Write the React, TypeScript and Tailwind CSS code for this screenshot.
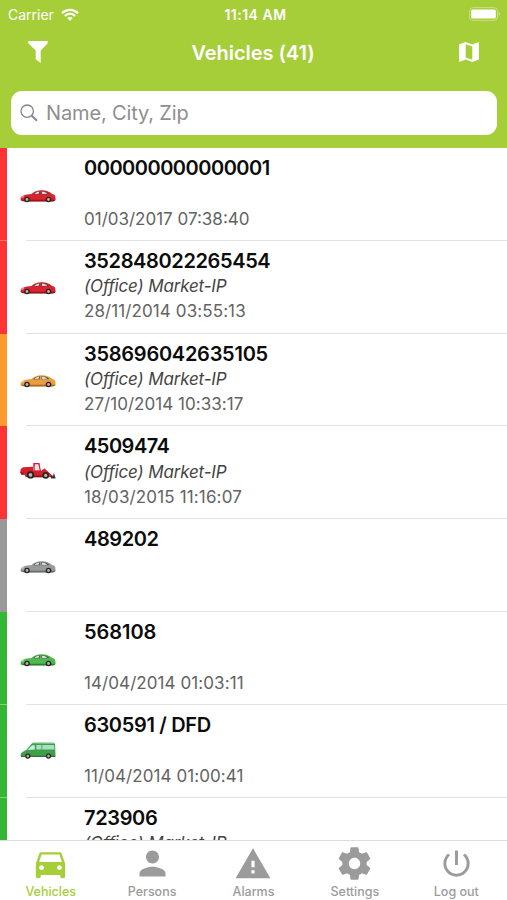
import type { ReactNode } from 'react';

type VehicleKind = 'car' | 'loader' | 'van' | 'none';

type Vehicle = {
  name: string;
  nameClass: string;
  group?: string;
  date?: string;
  dateClass?: string;
  kind: VehicleKind;
  paint: string;
  shade: string;
  bar: string;
};

const VEHICLES: Vehicle[] = [
  { name: '000000000000001', nameClass: 'tracking-[-0.5px]', date: '01/03/2017 07:38:40', dateClass: 'tracking-[0px]', kind: 'car', paint: '#d9232e', shade: '#96141c', bar: 'bg-[#fe3434] border-[#fb7474]' },
  { name: '352848022265454', nameClass: 'tracking-[-0.37px]', group: '(Office) Market-IP', date: '28/11/2014 03:55:13', dateClass: 'tracking-[0.1px]', kind: 'car', paint: '#d9232e', shade: '#96141c', bar: 'bg-[#fe3434] border-[#fe3434]' },
  { name: '358696042635105', nameClass: 'tracking-[-0.26px]', group: '(Office) Market-IP', date: '27/10/2014 10:33:17', dateClass: 'tracking-[0.04px]', kind: 'car', paint: '#eb9c3c', shade: '#a8681f', bar: 'bg-[#fe9a2e] border-[#fe9a2e]' },
  { name: '4509474', nameClass: 'tracking-[-0.5px]', group: '(Office) Market-IP', date: '18/03/2015 11:16:07', dateClass: 'tracking-[0.15px]', kind: 'loader', paint: '#d61f2c', shade: '#8f1019', bar: 'bg-[#fe3434] border-[#fe3434]' },
  { name: '489202', nameClass: 'tracking-[-0.4px]', kind: 'car', paint: '#9a9a9a', shade: '#6a6a6a', bar: 'bg-[#999999] border-[#999999]' },
  { name: '568108', nameClass: 'tracking-[-0.05px]', date: '14/04/2014 01:03:11', dateClass: 'tracking-[0.08px]', kind: 'car', paint: '#4fb84f', shade: '#2f7d35', bar: 'bg-[#33b734] border-[#7fd080]' },
  { name: '630591 / DFD', nameClass: 'tracking-[-0.33px]', date: '11/04/2014 01:00:41', dateClass: 'tracking-[0.08px]', kind: 'van', paint: '#3f9f49', shade: '#2c7436', bar: 'bg-[#33b734] border-[#7fd080]' },
  { name: '723906', nameClass: 'tracking-[-0.35px]', group: '(Office) Market-IP', kind: 'none', paint: '', shade: '', bar: 'bg-[#33b734] border-[#33b734]' },
];

function Wheel({ x, y, r }: { x: number; y: number; r: number }) {
  return (
    <>
      <circle cx={x} cy={y} r={r} fill="#2b2222" />
      <circle cx={x} cy={y} r={r * 0.5} fill="#b9b4b0" />
    </>
  );
}

function VehicleIcon({ kind, paint, shade }: Pick<Vehicle, 'kind' | 'paint' | 'shade'>) {
  if (kind === 'car') {
    return (
      <svg className="w-9 h-6" viewBox="0 0 36 24">
        <path d="M.6 16.2C.4 13.6 1 12.6 3 11.8c2.500-.9 5.500-1.500 8.400-1.700C14.500 7.500 17 6.300 21 6.300c5.500 0 8.300 1.200 11 3.600 2 .4 3 1 3.200 2.200l.4 3.300c-.1 1.100-1.200 1.700-2.800 1.900H7C3.800 17.300 1.600 17.100.6 16.200z" fill={paint} />
        <path d="M1 15.800h34.400c-.4 1-1.500 1.500-3 1.600H6c-2.500 0-4.400-.4-5-1.600z" fill={shade} />
        <path d="M13 10.200c2.400-2 4.300-2.900 7-3l-.4 3zM21.200 7.200c3.500 0 6 .7 8.300 2.700l-7.700.3z" fill="#4a4444" />
        <path d="M14.400 9.900c1.600-1.400 3.100-2.100 4.900-2.300l-.6 2.200zM21.800 7.700c2.400 0 4 .5 5.500 2l-5 .2z" fill="#dce5e7" />
        <path d="M1.400 12.900l2.300-.7.600.9-2.500.7z" fill="#f3d5c8" />
        <Wheel x={7} y={15.500} r={2.800} />
        <Wheel x={28.500} y={15.500} r={2.800} />
      </svg>
    );
  }
  if (kind === 'loader') {
    return (
      <svg className="w-9 h-6" viewBox="0 2 36 24">
        <path d="M.3 12.800c0-3.200.7-4.900 3-5.500l9.700-.6V17H5.500l-.7-2z" fill={paint} />
        <path d="M13.300 12V3h6.200l1.600 9z" fill={paint} />
        <path d="M14.600 10.500l.3-6.300h3.500l1.300 6.300z" fill="#e9e2e8" />
        <path d="M12 10.800h9l5.500.2 4.500 4.500-2 1.700H12z" fill={paint} />
        <path d="M13 15.500h12v1.700H13z" fill={shade} />
        <path d="M21.500 10.600l3-2.200 7.800 7-1.600 1.500z" fill={paint} />
        <path d="M.3 12.300h2l2.500 2.400H1.200z" fill={shade} />
        <path d="M30 16.200l3.300-.8.600-2.700 1.800 5.800h-4.400z" fill="#3c3030" />
        <Wheel x={10.500} y={14.900} r={3.700} />
        <Wheel x={25.700} y={15.400} r={3.300} />
      </svg>
    );
  }
  if (kind === 'van') {
    return (
      <svg className="w-9 h-6" viewBox="0 1.5 36 24">
        <path d="M.8 17.800c-.4-2.200 0-3.700 1.700-4.400l4-2.200 4.800-5.700c.7-.9 1.600-1.300 3-1.300h18.500c1.500 0 2.200.8 2.300 2l.4 11.600z" fill={paint} />
        <path d="M12 5c.8-.6 1.300-.8 2.300-.8h18.500c1.300 0 1.900.4 2.200 1.300z" fill="#7cc887" />
        <path d="M.8 17.200h34.600v1.200H1z" fill={shade} />
        <path d="M7.600 11.400l4.400-4.700h2.800v4.300z" fill="#c9ece8" />
        <path d="M16.300 6.600h5.200V11h-5.200zM22.300 6.600h11.800l.3 4.400H22.300z" fill="#a9dfc5" />
        <Wheel x={7.800} y={17.600} r={2.600} />
        <Wheel x={28.500} y={17.600} r={2.600} />
      </svg>
    );
  }
  return null;
}

function VehicleRow({ v }: { v: Vehicle }) {
  return (
    <div className="flex h-[92.83px] shrink-0">
      <div className={`w-[7px] border-b ${v.bar}`} />
      <div className="w-[13px]" />
      <div className="w-9 pt-[35.500px]">
        <VehicleIcon kind={v.kind} paint={v.paint} shade={v.shade} />
      </div>
      <div className="flex-1 pl-[28px] pt-[8px] whitespace-nowrap">
        <div className={`h-[25.300px] leading-[25.300px] text-[20px] font-semibold text-[#0c0c0c] ${v.nameClass}`}>{v.name}</div>
        <div className="h-[25.300px] leading-[25.300px] text-[17px] italic text-[#444] tracking-[-0.16px]">{v.group}</div>
        <div className={`h-[25.300px] leading-[25.300px] text-[17px] text-[#636363] ${v.dateClass ?? ''}`}>{v.date}</div>
      </div>
    </div>
  );
}

const TABS: { label: string; active?: boolean; size: string; icon: ReactNode }[] = [
  {
    label: 'Vehicles',
    active: true,
    size: 'size-[39px]',
    icon: <path d="M18.920 6.010C18.720 5.420 18.160 5 17.500 5h-11c-.66 0-1.210.42-1.420 1.010L3 12v8c0 .55.45 1 1 1h1c.55 0 1-.45 1-1v-1h12v1c0 .55.45 1 1 1h1c.55 0 1-.45 1-1v-8l-2.080-5.990zM6.500 16c-.83 0-1.500-.67-1.500-1.500S5.670 13 6.500 13s1.500.67 1.500 1.500S7.330 16 6.500 16zm11 0c-.83 0-1.500-.67-1.500-1.500s.67-1.500 1.500-1.500 1.500.67 1.500 1.500-.67 1.500-1.500 1.500zM5 11l1.500-4.500h11L19 11H5z" />,
  },
  { label: 'Persons', size: 'size-[39px]', icon: <path d="M12 12c2.210 0 4-1.790 4-4s-1.790-4-4-4-4 1.790-4 4 1.790 4 4 4zm0 2c-2.670 0-8 1.340-8 4v2h16v-2c0-2.660-5.330-4-8-4z" /> },
  { label: 'Alarms', size: 'size-[38px]', icon: <path d="M1 21h22L12 2 1 21zm12-3h-2v-2h2v2zm0-4h-2v-4h2v4z" /> },
  {
    label: 'Settings',
    size: 'size-[39px]',
    icon: <path d="M19.430 12.980c.04-.32.07-.64.07-.98s-.03-.66-.07-.98l2.110-1.650c.19-.15.24-.42.12-.64l-2-3.460c-.12-.22-.39-.3-.61-.22l-2.490 1c-.52-.4-1.080-.73-1.690-.98l-.38-2.650C14.460 2.180 14.250 2 14 2h-4c-.25 0-.46.18-.49.42l-.38 2.650c-.61.25-1.170.59-1.690.98l-2.490-1c-.23-.09-.49 0-.61.22l-2 3.460c-.13.22-.07.49.12.64l2.110 1.650c-.04.32-.07.65-.07.98s.03.66.07.98l-2.110 1.650c-.19.15-.24.42-.12.64l2 3.460c.12.22.39.3.61.22l2.490-1c.52.4 1.080.73 1.690.98l.38 2.650c.03.24.24.42.49.42h4c.25 0 .46-.18.49-.42l.38-2.650c.61-.25 1.170-.59 1.690-.98l2.490 1c.23.09.49 0 .61-.22l2-3.460c.12-.22.07-.49-.12-.64l-2.110-1.650zM12 15.500c-1.930 0-3.500-1.570-3.500-3.500s1.570-3.500 3.500-3.500 3.500 1.570 3.500 3.500-1.570 3.500-3.500 3.500z" />,
  },
  { label: 'Log out', size: 'size-[35px]', icon: <path d="M13 3h-2v10h2V3zm4.830 2.170l-1.420 1.420C17.990 7.860 19 9.810 19 12c0 3.870-3.130 7-7 7s-7-3.130-7-7c0-2.190 1.010-4.140 2.580-5.420L6.170 5.170C4.230 6.820 3 9.260 3 12c0 4.970 4.030 9 9 9s9-4.030 9-9c0-2.740-1.230-5.180-3.170-6.830z" /> },
];

export default function App() {
  return (
    <div className="w-[507px] h-[900px] flex flex-col overflow-hidden bg-white font-[Inter,sans-serif]">
      <header className="h-[148px] shrink-0 bg-[#a6ce39] text-white">
        {/* Status bar */}
        <div className="h-7 grid grid-cols-3 items-center pl-[8px] pr-[6px] text-[14px]">
          <div className="flex items-center gap-[7px]">
            <span>Carrier</span>
            <svg className="w-[18px] h-[13px]" viewBox="0 0 18 13" fill="none" stroke="#fff" strokeWidth={2.300}>
              <path d="M1 5.100c4.600-4.400 11.400-4.400 16 0M3.900 8c3-2.800 7.200-2.800 10.200 0" />
              <path d="M9 13l-2.700-2.900c1.600-1.400 3.800-1.400 5.400 0z" fill="#fff" stroke="none" />
            </svg>
          </div>
          <div className="pl-[2px] text-center font-semibold whitespace-nowrap tracking-[0.5px]">11:14 AM</div>
          <svg className="justify-self-end w-8 h-[14px]" viewBox="0 0 32 14">
            <rect x={0.600} y={0.600} width={28} height={12.800} rx={3.600} fill="none" stroke="#cfe596" strokeWidth={0.800} />
            <rect x={2.200} y={2.400} width={24.600} height={9.200} rx={1.500} fill="#fff" />
            <path d="M29.800 5v4c1.400-.6 1.400-3.400 0-4z" fill="#d3e79d" />
          </svg>
        </div>

        {/* Title bar */}
        <div className="h-[49px] flex items-center justify-between pl-[28px] pr-[27px]">
          <svg className="w-5 h-[22px] -mt-[2px]" viewBox="0 0 20 22" fill="#fff">
            <path d="M.3 0h19.400v2.200L12.700 9.500V22l-5-3.800V9.500L.3 2.200z" />
          </svg>
          <h1 className="pt-[1px] text-[20px] font-semibold tracking-[-0.05px]">Vehicles (41)</h1>
          <svg className="w-[22px] h-[22px] -mt-[2px]" viewBox="2 2 20 20" fill="#fff">
            <path d="M20.500 3l-.16.03L15 5.100 9 3 3.360 4.900c-.21.07-.36.25-.36.48V20.500c0 .28.22.5.5.5l.16-.03L9 18.900l6 2.100 5.640-1.900c.21-.07.36-.25.36-.48V3.500c0-.28-.22-.5-.5-.5zM15 19l-6-2.110V5l6 2.110V19z" />
          </svg>
        </div>

        {/* Search */}
        <div className="mt-[14px] ml-[11px] mr-[10px] h-11 rounded-[11px] bg-white flex items-center pl-[9px] text-[20px] text-[#8e8e90]">
          <svg className="w-[18px] h-[18px] mr-[8px]" viewBox="0 0 18 18" fill="none" stroke="#858587">
            <circle cx={7.200} cy={7.200} r={6.200} strokeWidth={1.300} />
            <path d="M11.700 11.700l5.300 5" strokeWidth={1.900} />
          </svg>
          <span className="tracking-[-0.14px]">Name, City, Zip</span>
        </div>
      </header>

      <main className="flex-1 min-h-0 overflow-hidden">
        {VEHICLES.map(v => (
          <div key={v.name} className="bg-[linear-gradient(#e2e2e2,#e2e2e2)] bg-[length:481px_1px] bg-[position:right_bottom] bg-no-repeat">
            <VehicleRow v={v} />
          </div>
        ))}
      </main>

      <nav className="h-[60px] shrink-0 border-t border-[#dcdcdc] bg-white grid grid-cols-5">
        {TABS.map(t => (
          <div key={t.label} className={`flex flex-col items-center pt-[3px] ${t.active ? 'text-[#a6ce39]' : 'text-[#9b9b9b]'}`}>
            <div className="h-[39px] flex items-center">
              <svg className={t.size} viewBox="0 0 24 24" fill="currentColor">{t.icon}</svg>
            </div>
            <span className="text-[12.500px] leading-[18px] font-medium">{t.label}</span>
          </div>
        ))}
      </nav>
    </div>
  );
}
